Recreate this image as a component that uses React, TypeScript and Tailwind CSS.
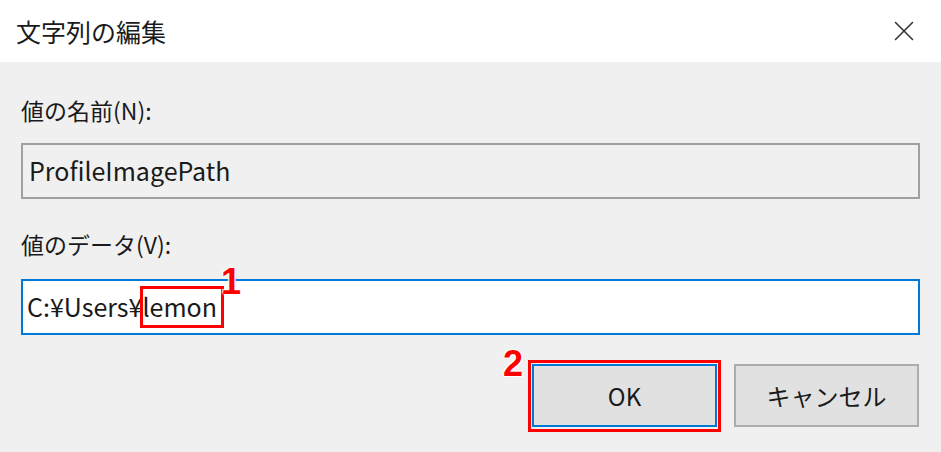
import { X } from "lucide-react";

const ui = "font-['Noto_Sans_CJK_JP',sans-serif]";
const mark =
  "font-['Liberation_Sans',sans-serif] font-bold text-[36px] leading-none text-[#ff0000] [text-shadow:0_0_2px_#fff,0_0_2px_#fff,1px_1px_1px_#fff,-1px_-1px_1px_#fff]";

export default function App() {
  return (
    <div className={`w-[941px] h-[452px] flex flex-col bg-[#f0f0f0] text-[#1a1a1a] ${ui}`}>
      <header className="h-[62px] flex items-center justify-between bg-white pl-[16px] pr-[20px]">
        <h1 className="text-[25px] leading-none">文字列の編集</h1>
        <X size={34} strokeWidth={1.1} className="text-[#333]" />
      </header>

      <main className="flex flex-col px-[21px]">
        <label className="mt-[33px] h-[30px] flex items-center text-[23px]">値の名前(N):</label>
        <div className="mt-[18px] h-[56px] flex items-center border-2 border-[#a0a0a0] bg-[#f0f0f0] px-[6px] text-[25px]">
          ProfileImagePath
        </div>

        <label className="mt-[30px] h-[30px] flex items-center text-[23px]">値のデータ(V):</label>
        <div className="relative mt-[20px] h-[56px] flex items-center border-2 border-[#0078d7] bg-white px-[4px] text-[25px]">
          <span>
            C:¥Users¥
            <span className="relative">
              lemon
              <span className="absolute -left-[2px] -right-[7px] -top-[2px] -bottom-[4px] border-[3px] border-[#ff0000]" />
              <span className={`absolute -right-[24px] -top-[24px] ${mark}`}>1</span>
            </span>
          </span>
        </div>

        <div className="mt-[29px] flex justify-end gap-[17px] pr-[1px]">
          <div className="relative">
            <button className="w-[185px] h-[63px] border-2 border-[#0078d7] bg-[#e1e1e1] text-[24px]">OK</button>
            <span className="absolute -left-[4px] -right-[4px] -top-[4px] -bottom-[5px] border-[3px] border-[#ff0000]" />
            <span className={`absolute -left-[29px] -top-[18px] ${mark}`}>2</span>
          </div>
          <button className="w-[185px] h-[63px] border-2 border-[#adadad] bg-[#e1e1e1] text-[24px]">キャンセル</button>
        </div>
      </main>
    </div>
  );
}
